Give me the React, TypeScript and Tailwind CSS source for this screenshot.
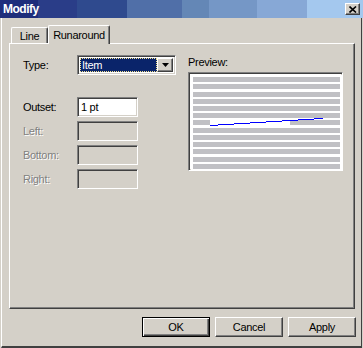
import React from "react";

const raised =
  "border border-t-white border-l-white border-r-[#404040] border-b-[#404040] shadow-[inset_-1px_-1px_0_#808080]";
const sunken =
  "border border-t-[#808080] border-l-[#808080] border-r-white border-b-white shadow-[inset_1px_1px_0_#404040,inset_-1px_-1px_0_#d4d0c8]";
const disabledText = "text-[#808080] [text-shadow:1px_1px_0_#ffffff]";

function Field({ label, value, disabled }: { label: string; value?: string; disabled?: boolean }) {
  return (
    <div className="flex items-center h-[20px]">
      <div className={"w-[54px] " + (disabled ? disabledText : "")}>{label}</div>
      <div
        className={
          "w-[61px] h-[20px] flex items-center pl-[3px] " +
          sunken +
          (disabled ? " bg-[#d4d0c8]" : " bg-white")
        }
      >
        {value}
      </div>
    </div>
  );
}

function Preview() {
  const rows = [2, 9, 17, 24, 31, 38, 45, 53, 60, 67, 74, 82, 89];
  const steps: [number, number, number][] = [
    [19, 27, 50],
    [27, 43, 49],
    [43, 59, 48],
    [59, 75, 47],
    [75, 91, 46],
    [91, 107, 45],
    [107, 123, 44],
    [123, 132, 43],
  ];
  return (
    <svg width="151" height="95" viewBox="0 0 151 95" className="block">
      <rect x="0" y="0" width="151" height="95" fill="#ffffff" />
      {rows.map((y, i) =>
        i === 6 ? (
          <g key={i}>
            <rect x="2" y={y} width="17" height="5" fill="#c0c0c4" />
            <rect x="99" y={y} width="50" height="5" fill="#c0c0c4" />
          </g>
        ) : (
          <rect key={i} x="2" y={y} width="147" height="5" fill="#c0c0c4" />
        )
      )}
      {steps.map(([x1, x2, y], i) => (
        <rect key={"s" + i} x={x1} y={y} width={x2 - x1} height="1" fill="#0000ff" />
      ))}
    </svg>
  );
}

export default function App() {
  return (
    <div className="w-[363px] h-[348px] bg-[#d4d0c8] flex flex-col overflow-hidden text-[11px] leading-[13px] tracking-[-0.3px] text-black font-['Liberation_Sans',Arial,sans-serif]">
      {/* Title bar */}
      <div className="h-[18px] shrink-0 flex items-center justify-between bg-[linear-gradient(90deg,#1e2d7b_0px,#1e2d7b_38px,#2a3d88_38px,#2a3d88_77px,#2f4a8e_77px,#2f4a8e_127px,#506fa8_127px,#506fa8_182px,#6487b6_182px,#6487b6_209px,#7597c6_209px,#7597c6_257px,#87a8d6_257px,#87a8d6_307px,#a4c8ee_307px,#a4c8ee_363px)]">
        <span className="pl-[3px] pt-px text-white font-bold text-[12px] tracking-[-0.5px]">Modify</span>
        <div className={"mr-[3px] w-[15px] h-[12px] bg-[#d4d0c8] flex items-center justify-center " + raised}>
          <svg width="8" height="7" viewBox="0 0 8 7">
            <path d="M0.5 0.5 L7 6.5 M7 0.5 L0.5 6.5" stroke="#000" strokeWidth="1.6" fill="none" />
          </svg>
        </div>
      </div>

      {/* Body */}
      <div className="flex-1 flex flex-col ml-px mr-px border-l border-l-white border-r border-r-[#404040] border-b-2 border-b-[#404040]">
        <div className="pl-[7px] pr-[6px] pt-[7px] flex flex-col">
          {/* Tabs */}
          <div className="flex items-end h-[18px] pl-[2px]">
            <div className="h-[16px] w-[37px] flex items-start justify-center pt-[2px] border-l border-t border-l-white border-t-white border-r border-r-[#404040] shadow-[inset_-1px_0_0_#808080] rounded-tl-[2px] rounded-tr-[2px]">
              Line
            </div>
            <div className="relative z-10 -mb-px h-[19px] w-[62px] bg-[#d4d0c8] flex items-start justify-center pt-[3px] border-l border-t border-l-white border-t-white border-r border-r-[#404040] shadow-[inset_-1px_0_0_#808080] rounded-tl-[2px] rounded-tr-[2px]">
              Runaround
            </div>
          </div>
          {/* Panel */}
          <div className="h-[266px] flex border-l border-t border-l-white border-t-white border-r border-b border-r-[#404040] border-b-[#404040] shadow-[inset_-1px_-1px_0_#808080]">
            <div className="w-[178px] pl-[13px] pt-[11px] flex flex-col">
              <div className="flex items-center h-[20px]">
                <div className="w-[54px]">Type:</div>
                <div className={"w-[99px] h-[20px] flex p-[2px] bg-white " + sunken}>
                  <div className="flex-1 bg-[#0a246a] border border-dotted border-[#f3e18e] text-white flex items-center pl-px">
                    Item
                  </div>
                  <div className={"w-[16px] bg-[#d4d0c8] flex items-center justify-center " + raised}>
                    <svg width="7" height="4" viewBox="0 0 7 4">
                      <path d="M0 0 H7 L3.5 4 Z" fill="#000" />
                    </svg>
                  </div>
                </div>
              </div>
              <div className="mt-[22px] flex flex-col gap-[4px]">
                <Field label="Outset:" value="1 pt" />
                <Field label="Left:" disabled />
                <Field label="Bottom:" disabled />
                <Field label="Right:" disabled />
              </div>
            </div>
            <div className="pt-[12px] flex flex-col">
              <div className="h-[13px]">Preview:</div>
              <div className={"mt-[3px] w-[155px] h-[99px] bg-white p-px " + sunken}>
                <div className="p-px">
                  <Preview />
                </div>
              </div>
            </div>
          </div>
        </div>

        {/* Buttons */}
        <div className="mt-[8px] flex justify-end gap-[5px] pr-[5px]">
          <button className="w-[68px] h-[20px] bg-[#d4d0c8] border border-black shadow-[inset_1px_1px_0_#ffffff,inset_-1px_-1px_0_#404040,inset_-2px_-2px_0_#808080] flex items-center justify-center">
            OK
          </button>
          <button className={"w-[68px] h-[20px] bg-[#d4d0c8] flex items-center justify-center " + raised}>
            Cancel
          </button>
          <button className={"w-[68px] h-[20px] bg-[#d4d0c8] flex items-center justify-center " + raised}>
            Apply
          </button>
        </div>
      </div>
    </div>
  );
}
